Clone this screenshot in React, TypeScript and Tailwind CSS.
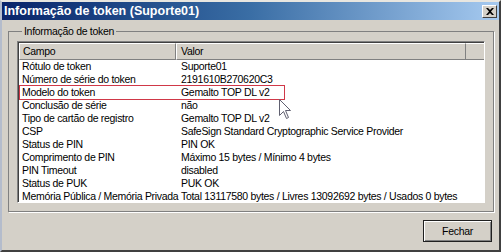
const rows: [string, string][] = [
  ['Rótulo de token', 'Suporte01'],
  ['Número de série do token', '2191610B270620C3'],
  ['Modelo do token', 'Gemalto TOP DL v2'],
  ['Conclusão de série', 'não'],
  ['Tipo de cartão de registro', 'Gemalto TOP DL v2'],
  ['CSP', 'SafeSign Standard Cryptographic Service Provider'],
  ['Status de PIN', 'PIN OK'],
  ['Comprimento de PIN', 'Máximo 15 bytes / Mínimo 4 bytes'],
  ['PIN Timeout', 'disabled'],
  ['Status de PUK', 'PUK OK'],
  ['Memória Pública / Memória Privada', 'Total 13117580 bytes / Livres 13092692 bytes / Usados 0 bytes'],
];

function Cursor() {
  return (
    <svg className="absolute left-[277px] top-[97px]" width="13" height="21" viewBox="0 0 13 21" aria-hidden="true">
      <path
        d="M0.5 0.5 L0.5 16.5 L4.5 12.5 L7.5 19.5 L9.5 18.5 L6.5 11.5 L11.5 11.5 Z"
        fill="#fff"
        stroke="#606070"
        strokeWidth="1"
        strokeLinejoin="miter"
      />
    </svg>
  );
}

export default function App() {
  return (
    <div
      className="relative w-[501px] h-[252px] bg-[#d4d0c8] border-2 border-t-[#e8e6e0] border-l-[#b4bccc] border-r-[#404040] border-b-[#404040] flex flex-col text-[10.5px] tracking-[-0.3px] text-black overflow-hidden"
      style={{ fontFamily: '"Liberation Sans", Arial, sans-serif' }}
    >
      {/* Title bar */}
      <div className="h-[18px] bg-gradient-to-r from-[#0a246a] via-[#3a6ea5] to-[#a6caf0] flex items-center justify-between pl-[2px] pr-[2px]">
        <span className="text-white font-bold text-[12.5px] tracking-normal leading-none">Informação de token (Suporte01)</span>
        <button
          type="button"
          className="w-[15px] h-[13px] bg-[#d4d0c8] border border-t-white border-l-white border-r-[#404040] border-b-[#404040] flex items-center justify-center"
        >
          <svg width="8" height="7" viewBox="0 0 8 7" aria-hidden="true">
            <path d="M0 0h2l2 2 2-2h2L5 3.5 8 7H6L4 5 2 7H0l3-3.5z" fill="#000" />
          </svg>
        </button>
      </div>

      {/* Body */}
      <div className="flex-1 flex flex-col px-[6px] pt-[5px]">
        <fieldset className="border border-[#808080] shadow-[1px_1px_0_#fff] px-[8px] pt-[3px] pb-[7px] h-[187px]">
          <legend className="ml-[5px] px-[2px] leading-[13px]">Informação de token</legend>
          <div className="relative bg-white border border-t-[#808080] border-l-[#808080] border-r-white border-b-white shadow-[inset_1px_1px_0_#404040] w-[468px] h-[162px] pl-[1px] pt-[1px]">
            {/* Header */}
            <div className="flex h-[17px] bg-[#d4d0c8]">
              <div className="w-[157px] border border-t-white border-l-white border-r-[#808080] border-b-[#808080] pl-[3px] leading-[15px]">
                Campo
              </div>
              <div className="w-[290px] border border-t-white border-l-white border-r-[#808080] border-b-[#808080] pl-[4px] leading-[15px]">
                Valor
              </div>
              <div className="flex-1 border-t border-t-white border-b border-b-[#808080]" />
            </div>
            {/* Rows */}
            {rows.map(([k, v], i) => (
              <div key={k} className="relative flex h-[13px] leading-[13px] whitespace-nowrap">
                <div className="w-[157px] pl-[3px]">{k}</div>
                <div className="pl-[5px]">{v}</div>
                {i === 2 && (
                  <div className="absolute left-0 top-[-1px] w-[266px] h-[15px] border border-[#d03848]" />
                )}
              </div>
            ))}
          </div>
        </fieldset>

        <div className="flex justify-end pt-[8px] pr-[1px]">
          <button
            type="button"
            className="w-[69px] h-[22px] bg-[#d4d0c8] border border-[#202020] shadow-[inset_1px_1px_0_#fff,inset_-1px_-1px_0_#808080] leading-[20px]"
          >
            Fechar
          </button>
        </div>
      </div>

      <Cursor />
    </div>
  );
}
